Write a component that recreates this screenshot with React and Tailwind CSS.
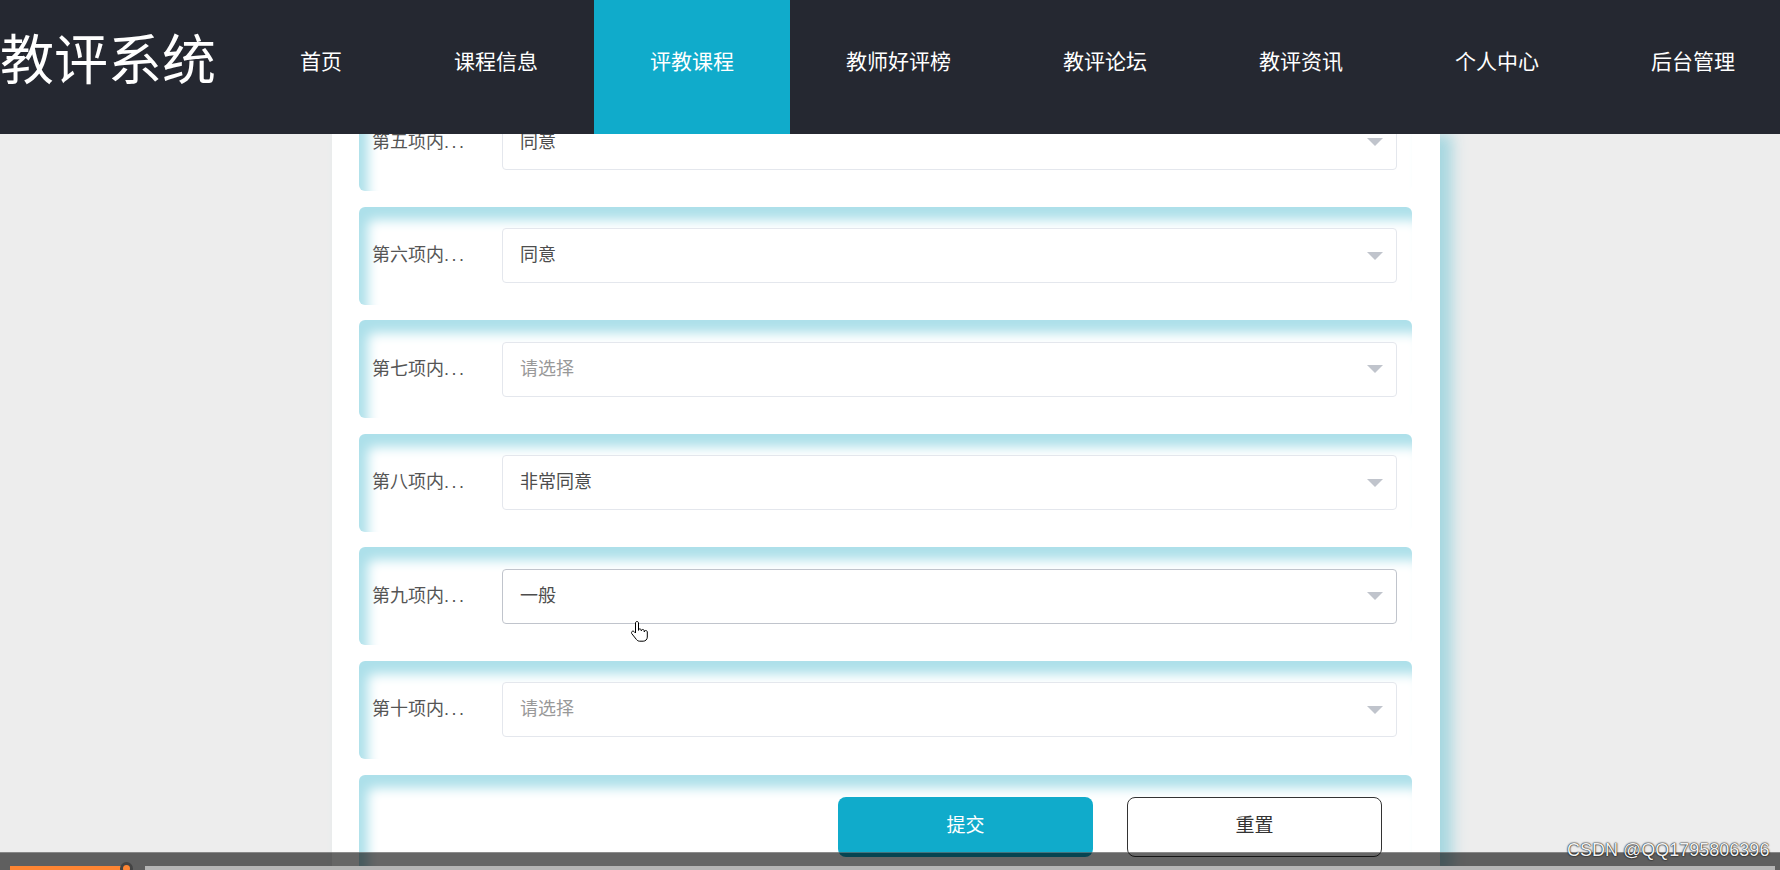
import React from "react";

const navItems = ["首页", "课程信息", "评教课程", "教师好评榜", "教评论坛", "教评资讯", "个人中心", "后台管理"];

const rows = [
  { label: "第五项内", value: "同意" },
  { label: "第六项内", value: "同意" },
  { label: "第七项内", value: "" },
  { label: "第八项内", value: "非常同意" },
  { label: "第九项内", value: "一般", hover: true },
  { label: "第十项内", value: "" },
];

function Caret() {
  return (
    <svg width="16" height="8" viewBox="0 0 16 8" className="shrink-0">
      <path d="M0 0h16L8 8z" fill="#c0c4cc" />
    </svg>
  );
}

function FormRow({ label, value, hover }) {
  return (
    <div className="flex h-[98px] items-center rounded-md bg-white pl-[13px] pr-[15px] shadow-[inset_9px_13px_12px_#ade0ea]">
      <div className="w-[130px] shrink-0 whitespace-nowrap text-[18px] text-[#555]">
        {label}
        <span className="tracking-[2.5px]">...</span>
      </div>
      <div
        className={
          "flex h-[55px] flex-1 items-center justify-between rounded-[4px] border bg-white pl-[17px] pr-[13px] text-[18px] " +
          (hover ? "border-[#c0c4cc]" : "border-[#e4e7ed]")
        }
      >
        {value ? (
          <span className="text-[#4d4d4d]">{value}</span>
        ) : (
          <span className="text-[#999]">请选择</span>
        )}
        <Caret />
      </div>
    </div>
  );
}

export default function App() {
  return (
    <div className="relative h-[870px] w-[1780px] overflow-hidden bg-[#ededed] font-['Liberation_Sans','Noto_Sans_CJK_SC',sans-serif]">
      {/* top navigation */}
      <header className="relative z-10 flex h-[134px] bg-[#252831] text-white">
        <div className="flex w-[244px] shrink-0 items-center pb-[12px]">
          <span className="whitespace-nowrap text-[54px] leading-none">教评系统</span>
        </div>
        <nav className="flex">
          {navItems.map((item) => (
            <div
              key={item}
              className={
                "flex h-full items-center whitespace-nowrap px-[56px] pb-[10px] text-[21px] " +
                (item === "评教课程" ? "bg-[#10abcb]" : "")
              }
            >
              {item}
            </div>
          ))}
        </nav>
      </header>

      {/* form card */}
      <div className="flex">
        <div className="ml-[332px] w-[1108px] bg-white pl-[27px] pr-[28px] shadow-[12px_0_14px_#a6d7e0]">
          <div className="-mt-[41px] flex flex-col gap-[15.6px]">
            {rows.map((r) => (
              <FormRow key={r.label} {...r} />
            ))}
            <div className="flex h-[98px] items-start justify-end gap-[34px] rounded-md bg-white pr-[30px] pt-[22px] shadow-[inset_9px_13px_12px_#ade0ea]">
              <button className="h-[60px] w-[255px] rounded-[8px] bg-[#10abcb] text-[19px] text-white">提交</button>
              <button className="h-[60px] w-[255px] rounded-[8px] border border-[#333] bg-white text-[19px] text-[#333]">重置</button>
            </div>
          </div>
        </div>
      </div>

      {/* mouse pointer */}
      <svg className="absolute left-[631px] top-[620px]" width="18" height="24" viewBox="0 0 18 24">
        <path
          d="M6 1.5c-.9 0-1.5.7-1.5 1.5v10l-1.4-1.4c-.6-.6-1.6-.6-2.2 0s-.6 1.6 0 2.2l4.6 5.8c.8 1 1.9 1.6 3.1 1.6h3.6c2.3 0 4.1-1.8 4.1-4.1V12c0-.8-.7-1.5-1.5-1.5S13.3 11.2 13.3 12v-1c0-.8-.7-1.5-1.5-1.5s-1.5.7-1.5 1.5v-.6c0-.8-.7-1.5-1.5-1.5s-1.3.7-1.3 1.5V3c0-.8-.6-1.5-1.5-1.5z"
          fill="#fff"
          stroke="#000"
          strokeWidth="1"
        />
      </svg>

      {/* video player bar */}
      <div className="absolute bottom-0 left-0 right-0 h-[18px] border-t border-white/25 bg-black/60">
        <div className="absolute bottom-0 left-[145px] right-[5px] h-[4px] bg-[#b5b5b5]" />
        <div className="absolute bottom-0 left-[10px] h-[4px] w-[116px] bg-[#ff8533]" />
        <div className="absolute bottom-[-5px] left-[120px] h-[13px] w-[13px] rounded-full border-[3px] border-[#444] bg-[#ff8533]" />
      </div>

      {/* watermark */}
      <div className="absolute left-[1567px] top-[841px] whitespace-nowrap text-[18px] leading-none text-[#f2f2f2] [text-shadow:0_0_2px_#000,0_0_1px_#000]">
        CSDN @QQ1795806396
      </div>
    </div>
  );
}
